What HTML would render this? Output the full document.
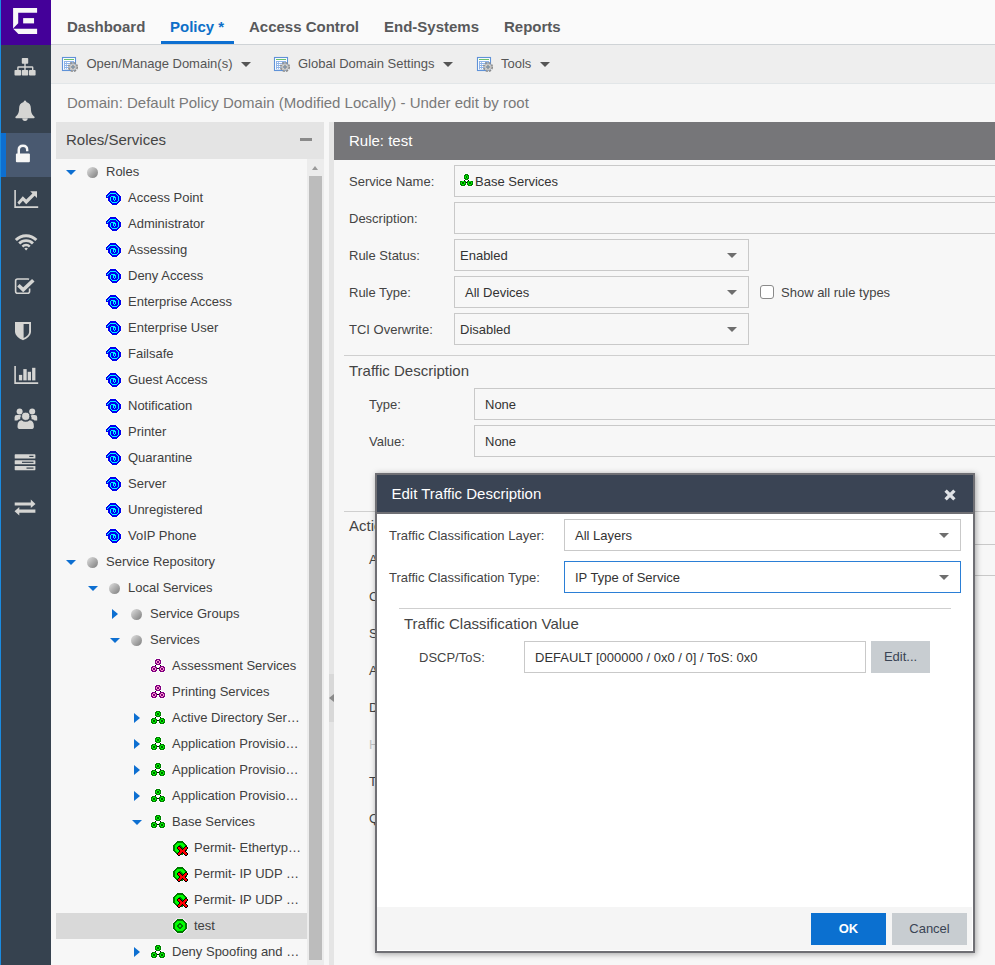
<!DOCTYPE html>
<html lang="en">
<head>
<meta charset="utf-8">
<title>Policy</title>
<style>
*{box-sizing:border-box;margin:0;padding:0}
html,body{width:995px;height:965px;overflow:hidden;background:#f7f7f7;font-family:"Liberation Sans",Arial,sans-serif;color:#444;font-size:14px}
.abs{position:absolute}
#app{position:relative;width:995px;height:965px;overflow:hidden;background:#f7f7f7}
/* sidebar */
#edge{left:0;top:0;width:1px;height:965px;background:#1a8be0}
#logo{left:1px;top:0;width:50px;height:45px;background:#440099}
#side{left:1px;top:45px;width:50px;height:920px;background:#36424f}
#sideact{left:1px;top:133px;width:50px;height:44px;background:#495970;border-left:5px solid #0d6fd1}
.sic{position:absolute;left:1px;width:50px;height:44px}
/* nav */
#nav{left:51px;top:0;width:944px;height:45px;background:#fafafa;border-bottom:1px solid #cfd3d6}
.tab{position:absolute;top:16.5px;font-size:15px;font-weight:bold;color:#58595b;line-height:20px;white-space:nowrap}
.tab.on{color:#0d6fc8}
#tabline{left:161px;top:41px;width:73px;height:3px;background:#0d6fd1}
/* toolbar */
#tb{left:51px;top:45px;width:944px;height:39px;background:#eeeeee;border-bottom:1px solid #e2e6e8}
.tbt{position:absolute;top:54.5px;font-size:13px;color:#555;line-height:18px;white-space:nowrap}
.caret{position:absolute;width:0;height:0;border-left:5px solid transparent;border-right:5px solid transparent;border-top:5px solid #555}
#dom{left:67px;top:93px;font-size:15px;color:#7a7a7a;line-height:20px;white-space:nowrap}
/* left panel */
#lph{left:56px;top:122px;width:268px;height:37px;background:#e4e4e4}
#lpt{left:66px;top:130px;font-size:15px;color:#444;line-height:20px}
#lpm{left:300px;top:138px;width:12px;height:3px;background:#8a8a8a}
#tree{left:56px;top:159px;width:251px;height:806px;background:#f7f7f7;overflow:hidden}
.row{position:absolute;left:0;width:251px;height:26px;font-size:13px;color:#404040;line-height:26px;white-space:nowrap}
.row.sel{background:#d9d9d9}
.row span{position:absolute;top:0}
.row i{position:absolute;display:block}
.exd{top:11px;width:0;height:0;border-left:5px solid transparent;border-right:5px solid transparent;border-top:5px solid #0d6fd1}
.exr{top:8px;width:0;height:0;border-top:5px solid transparent;border-bottom:5px solid transparent;border-left:6px solid #0d6fd1}
.ball{top:8px;width:11px;height:11px;border-radius:50%;background:linear-gradient(135deg,#d6d6d6 12%,#adadad 50%,#868686 90%)}
.ti{position:absolute;top:5px}
#sb{left:307px;top:159px;width:17px;height:806px;background:#ececec}
#sbt{left:309px;top:176px;width:13px;height:784px;background:#bcbcbc}
#split{left:329px;top:122px;width:5px;height:843px;background:#e5e5e5}
/* right panel */
#rph{left:334px;top:122px;width:661px;height:38px;background:#767679}
#rpt{left:349px;top:131px;font-size:15px;color:#fff;line-height:20px}
.lbl{position:absolute;margin-top:1px;font-size:13px;color:#444;line-height:18px;white-space:nowrap}
.fld{position:absolute;background:transparent;border:1px solid #c9c9c9;font-size:13px;color:#333;line-height:32px;height:32px;white-space:nowrap}
.fld.w{background:#fff}
.dd{position:absolute;right:11px;top:13px;width:0;height:0;border-left:5px solid transparent;border-right:5px solid transparent;border-top:5px solid #6e6e6e}
.cb{width:14px;height:14px;border:1px solid #8a8a8a;border-radius:3px;background:#fff}
.hl{position:absolute;height:1px;background:#cfcfcf}
.sec{position:absolute;font-size:15px;color:#444;line-height:20px;white-space:nowrap}
/* modal */
#modal{left:375px;top:473px;width:600px;height:480px;background:#fff;border:2px solid #6f6f74;box-shadow:1px 1px 6px rgba(0,0,0,.35)}
#mh{left:377px;top:475px;width:596px;height:39px;background:#3a4454;border-bottom:2px solid #6f6f74}
#mt{left:391.5px;top:484px;font-size:15px;color:#fff;line-height:20px;white-space:nowrap}
#mf{left:377px;top:907px;width:595px;height:43px;background:#f5f5f5}
.btn{position:absolute;height:32px;line-height:32px;text-align:center;font-size:13px}
</style>
</head>
<body>
<div id="app">
<svg width="0" height="0" style="position:absolute">
<defs>
<symbol id="i-role" viewBox="0 0 16 16"><path d="M4 1H10L15 6V11L11 15H6L2 11V8H0V5z" fill="none" stroke="#fffff2" stroke-width="1.6" stroke-opacity=".8"/><g shape-rendering="crispEdges"><rect x="4" y="1" width="6" height="1" fill="#0000f0"/><rect x="3" y="2" width="8" height="1" fill="#0000f0"/><rect x="2" y="3" width="2" height="1" fill="#0000f0"/><rect x="4" y="3" width="6" height="1" fill="#00f6ff"/><rect x="10" y="3" width="2" height="1" fill="#0000f0"/><rect x="1" y="4" width="2" height="1" fill="#0000f0"/><rect x="3" y="4" width="1" height="1" fill="#00f6ff"/><rect x="4" y="4" width="6" height="1" fill="#0000f0"/><rect x="10" y="4" width="1" height="1" fill="#00f6ff"/><rect x="11" y="4" width="2" height="1" fill="#0000f0"/><rect x="0" y="5" width="2" height="1" fill="#0000f0"/><rect x="2" y="5" width="1" height="1" fill="#00f6ff"/><rect x="3" y="5" width="8" height="1" fill="#0000f0"/><rect x="11" y="5" width="1" height="1" fill="#00f6ff"/><rect x="12" y="5" width="2" height="1" fill="#0000f0"/><rect x="0" y="6" width="1" height="1" fill="#0000f0"/><rect x="1" y="6" width="1" height="1" fill="#00f6ff"/><rect x="2" y="6" width="3" height="1" fill="#0000f0"/><rect x="5" y="6" width="4" height="1" fill="#00f6ff"/><rect x="9" y="6" width="3" height="1" fill="#0000f0"/><rect x="12" y="6" width="1" height="1" fill="#00f6ff"/><rect x="13" y="6" width="2" height="1" fill="#0000f0"/><rect x="0" y="7" width="4" height="1" fill="#0000f0"/><rect x="4" y="7" width="1" height="1" fill="#00f6ff"/><rect x="5" y="7" width="2" height="1" fill="#0000f0"/><rect x="7" y="7" width="3" height="1" fill="#00f6ff"/><rect x="10" y="7" width="2" height="1" fill="#0000f0"/><rect x="12" y="7" width="1" height="1" fill="#00f6ff"/><rect x="13" y="7" width="2" height="1" fill="#0000f0"/><rect x="2" y="8" width="2" height="1" fill="#0000f0"/><rect x="4" y="8" width="1" height="1" fill="#00f6ff"/><rect x="5" y="8" width="2" height="1" fill="#0000f0"/><rect x="7" y="8" width="1" height="1" fill="#00f6ff"/><rect x="8" y="8" width="1" height="1" fill="#0000f0"/><rect x="9" y="8" width="1" height="1" fill="#00f6ff"/><rect x="10" y="8" width="2" height="1" fill="#0000f0"/><rect x="12" y="8" width="1" height="1" fill="#00f6ff"/><rect x="13" y="8" width="2" height="1" fill="#0000f0"/><rect x="2" y="9" width="2" height="1" fill="#0000f0"/><rect x="4" y="9" width="1" height="1" fill="#00f6ff"/><rect x="5" y="9" width="2" height="1" fill="#0000f0"/><rect x="7" y="9" width="1" height="1" fill="#00f6ff"/><rect x="8" y="9" width="1" height="1" fill="#0000f0"/><rect x="9" y="9" width="1" height="1" fill="#00f6ff"/><rect x="10" y="9" width="2" height="1" fill="#0000f0"/><rect x="12" y="9" width="1" height="1" fill="#00f6ff"/><rect x="13" y="9" width="2" height="1" fill="#0000f0"/><rect x="2" y="10" width="2" height="1" fill="#0000f0"/><rect x="4" y="10" width="1" height="1" fill="#00f6ff"/><rect x="5" y="10" width="3" height="1" fill="#0000f0"/><rect x="8" y="10" width="1" height="1" fill="#00f6ff"/><rect x="9" y="10" width="3" height="1" fill="#0000f0"/><rect x="12" y="10" width="1" height="1" fill="#00f6ff"/><rect x="13" y="10" width="2" height="1" fill="#0000f0"/><rect x="3" y="11" width="2" height="1" fill="#0000f0"/><rect x="5" y="11" width="1" height="1" fill="#00f6ff"/><rect x="6" y="11" width="5" height="1" fill="#0000f0"/><rect x="11" y="11" width="1" height="1" fill="#00f6ff"/><rect x="12" y="11" width="2" height="1" fill="#0000f0"/><rect x="4" y="12" width="2" height="1" fill="#0000f0"/><rect x="6" y="12" width="5" height="1" fill="#00f6ff"/><rect x="11" y="12" width="2" height="1" fill="#0000f0"/><rect x="5" y="13" width="7" height="1" fill="#0000f0"/><rect x="6" y="14" width="5" height="1" fill="#0000f0"/></g></symbol>
<symbol id="i-svcp" viewBox="0 0 16 16"><g fill="#fff" fill-opacity=".85"><circle cx="8" cy="4" r="3.9"/><circle cx="4" cy="11" r="3.9"/><circle cx="12" cy="11" r="3.9"/><rect x="5" y="6" width="6" height="4"/></g><g shape-rendering="crispEdges"><rect x="6" y="1" width="4" height="1" fill="#800080"/><rect x="5" y="2" width="2" height="1" fill="#800080"/><rect x="7" y="2" width="2" height="1" fill="#ff99cc"/><rect x="9" y="2" width="2" height="1" fill="#800080"/><rect x="5" y="3" width="1" height="1" fill="#800080"/><rect x="6" y="3" width="1" height="1" fill="#ff99cc"/><rect x="7" y="3" width="2" height="1" fill="#800080"/><rect x="9" y="3" width="1" height="1" fill="#ff99cc"/><rect x="10" y="3" width="1" height="1" fill="#800080"/><rect x="5" y="4" width="1" height="1" fill="#800080"/><rect x="6" y="4" width="1" height="1" fill="#ff99cc"/><rect x="7" y="4" width="2" height="1" fill="#800080"/><rect x="9" y="4" width="1" height="1" fill="#ff99cc"/><rect x="10" y="4" width="1" height="1" fill="#800080"/><rect x="5" y="5" width="2" height="1" fill="#800080"/><rect x="7" y="5" width="2" height="1" fill="#ff99cc"/><rect x="9" y="5" width="2" height="1" fill="#800080"/><rect x="6" y="6" width="4" height="1" fill="#800080"/><rect x="2" y="8" width="4" height="1" fill="#800080"/><rect x="1" y="9" width="2" height="1" fill="#800080"/><rect x="3" y="9" width="2" height="1" fill="#ff99cc"/><rect x="5" y="9" width="2" height="1" fill="#800080"/><rect x="1" y="10" width="1" height="1" fill="#800080"/><rect x="2" y="10" width="1" height="1" fill="#ff99cc"/><rect x="3" y="10" width="2" height="1" fill="#800080"/><rect x="5" y="10" width="1" height="1" fill="#ff99cc"/><rect x="6" y="10" width="1" height="1" fill="#800080"/><rect x="1" y="11" width="1" height="1" fill="#800080"/><rect x="2" y="11" width="1" height="1" fill="#ff99cc"/><rect x="3" y="11" width="2" height="1" fill="#800080"/><rect x="5" y="11" width="1" height="1" fill="#ff99cc"/><rect x="6" y="11" width="1" height="1" fill="#800080"/><rect x="1" y="12" width="2" height="1" fill="#800080"/><rect x="3" y="12" width="2" height="1" fill="#ff99cc"/><rect x="5" y="12" width="2" height="1" fill="#800080"/><rect x="2" y="13" width="4" height="1" fill="#800080"/><rect x="10" y="8" width="4" height="1" fill="#800080"/><rect x="9" y="9" width="2" height="1" fill="#800080"/><rect x="11" y="9" width="2" height="1" fill="#ff99cc"/><rect x="13" y="9" width="2" height="1" fill="#800080"/><rect x="9" y="10" width="1" height="1" fill="#800080"/><rect x="10" y="10" width="1" height="1" fill="#ff99cc"/><rect x="11" y="10" width="2" height="1" fill="#800080"/><rect x="13" y="10" width="1" height="1" fill="#ff99cc"/><rect x="14" y="10" width="1" height="1" fill="#800080"/><rect x="9" y="11" width="1" height="1" fill="#800080"/><rect x="10" y="11" width="1" height="1" fill="#ff99cc"/><rect x="11" y="11" width="2" height="1" fill="#800080"/><rect x="13" y="11" width="1" height="1" fill="#ff99cc"/><rect x="14" y="11" width="1" height="1" fill="#800080"/><rect x="9" y="12" width="2" height="1" fill="#800080"/><rect x="11" y="12" width="2" height="1" fill="#ff99cc"/><rect x="13" y="12" width="2" height="1" fill="#800080"/><rect x="10" y="13" width="4" height="1" fill="#800080"/><rect x="5" y="7" width="1" height="1" fill="#000"/><rect x="10" y="7" width="1" height="1" fill="#000"/><rect x="7" y="10" width="2" height="1" fill="#000"/></g></symbol>
<symbol id="i-svcg" viewBox="0 0 16 16"><g fill="#fff" fill-opacity=".85"><circle cx="8" cy="4" r="3.9"/><circle cx="4" cy="11" r="3.9"/><circle cx="12" cy="11" r="3.9"/><rect x="5" y="6" width="6" height="4"/></g><g shape-rendering="crispEdges"><rect x="6" y="1" width="4" height="1" fill="#008000"/><rect x="5" y="2" width="2" height="1" fill="#008000"/><rect x="7" y="2" width="2" height="1" fill="#00ff00"/><rect x="9" y="2" width="2" height="1" fill="#008000"/><rect x="5" y="3" width="1" height="1" fill="#008000"/><rect x="6" y="3" width="1" height="1" fill="#00ff00"/><rect x="7" y="3" width="2" height="1" fill="#006000"/><rect x="9" y="3" width="1" height="1" fill="#00ff00"/><rect x="10" y="3" width="1" height="1" fill="#008000"/><rect x="5" y="4" width="1" height="1" fill="#008000"/><rect x="6" y="4" width="1" height="1" fill="#00ff00"/><rect x="7" y="4" width="2" height="1" fill="#006000"/><rect x="9" y="4" width="1" height="1" fill="#00ff00"/><rect x="10" y="4" width="1" height="1" fill="#008000"/><rect x="5" y="5" width="2" height="1" fill="#008000"/><rect x="7" y="5" width="2" height="1" fill="#00ff00"/><rect x="9" y="5" width="2" height="1" fill="#008000"/><rect x="6" y="6" width="4" height="1" fill="#008000"/><rect x="2" y="8" width="4" height="1" fill="#008000"/><rect x="1" y="9" width="2" height="1" fill="#008000"/><rect x="3" y="9" width="2" height="1" fill="#00ff00"/><rect x="5" y="9" width="2" height="1" fill="#008000"/><rect x="1" y="10" width="1" height="1" fill="#008000"/><rect x="2" y="10" width="1" height="1" fill="#00ff00"/><rect x="3" y="10" width="2" height="1" fill="#006000"/><rect x="5" y="10" width="1" height="1" fill="#00ff00"/><rect x="6" y="10" width="1" height="1" fill="#008000"/><rect x="1" y="11" width="1" height="1" fill="#008000"/><rect x="2" y="11" width="1" height="1" fill="#00ff00"/><rect x="3" y="11" width="2" height="1" fill="#006000"/><rect x="5" y="11" width="1" height="1" fill="#00ff00"/><rect x="6" y="11" width="1" height="1" fill="#008000"/><rect x="1" y="12" width="2" height="1" fill="#008000"/><rect x="3" y="12" width="2" height="1" fill="#00ff00"/><rect x="5" y="12" width="2" height="1" fill="#008000"/><rect x="2" y="13" width="4" height="1" fill="#008000"/><rect x="10" y="8" width="4" height="1" fill="#008000"/><rect x="9" y="9" width="2" height="1" fill="#008000"/><rect x="11" y="9" width="2" height="1" fill="#00ff00"/><rect x="13" y="9" width="2" height="1" fill="#008000"/><rect x="9" y="10" width="1" height="1" fill="#008000"/><rect x="10" y="10" width="1" height="1" fill="#00ff00"/><rect x="11" y="10" width="2" height="1" fill="#006000"/><rect x="13" y="10" width="1" height="1" fill="#00ff00"/><rect x="14" y="10" width="1" height="1" fill="#008000"/><rect x="9" y="11" width="1" height="1" fill="#008000"/><rect x="10" y="11" width="1" height="1" fill="#00ff00"/><rect x="11" y="11" width="2" height="1" fill="#006000"/><rect x="13" y="11" width="1" height="1" fill="#00ff00"/><rect x="14" y="11" width="1" height="1" fill="#008000"/><rect x="9" y="12" width="2" height="1" fill="#008000"/><rect x="11" y="12" width="2" height="1" fill="#00ff00"/><rect x="13" y="12" width="2" height="1" fill="#008000"/><rect x="10" y="13" width="4" height="1" fill="#008000"/><rect x="5" y="7" width="1" height="1" fill="#000"/><rect x="10" y="7" width="1" height="1" fill="#000"/><rect x="7" y="10" width="2" height="1" fill="#000"/></g></symbol>
<symbol id="i-rule" viewBox="0 0 16 16"><path d="M5 1H11L15 5V11L11 15H5L1 11V5z" fill="none" stroke="#fff4ff" stroke-width="1.6" stroke-opacity=".7"/><g shape-rendering="crispEdges"><rect x="5" y="1" width="6" height="1" fill="#007800"/><rect x="4" y="2" width="8" height="1" fill="#007800"/><rect x="3" y="3" width="2" height="1" fill="#007800"/><rect x="5" y="3" width="6" height="1" fill="#00ff00"/><rect x="11" y="3" width="2" height="1" fill="#007800"/><rect x="2" y="4" width="2" height="1" fill="#007800"/><rect x="4" y="4" width="8" height="1" fill="#00ff00"/><rect x="12" y="4" width="2" height="1" fill="#007800"/><rect x="1" y="5" width="2" height="1" fill="#007800"/><rect x="3" y="5" width="4" height="1" fill="#00ff00"/><rect x="7" y="5" width="2" height="1" fill="#007800"/><rect x="9" y="5" width="4" height="1" fill="#00ff00"/><rect x="13" y="5" width="2" height="1" fill="#007800"/><rect x="1" y="6" width="2" height="1" fill="#007800"/><rect x="3" y="6" width="3" height="1" fill="#00ff00"/><rect x="6" y="6" width="4" height="1" fill="#007800"/><rect x="10" y="6" width="3" height="1" fill="#00ff00"/><rect x="13" y="6" width="2" height="1" fill="#007800"/><rect x="1" y="7" width="2" height="1" fill="#007800"/><rect x="3" y="7" width="2" height="1" fill="#00ff00"/><rect x="5" y="7" width="2" height="1" fill="#007800"/><rect x="7" y="7" width="2" height="1" fill="#00ff00"/><rect x="9" y="7" width="2" height="1" fill="#007800"/><rect x="11" y="7" width="2" height="1" fill="#00ff00"/><rect x="13" y="7" width="2" height="1" fill="#007800"/><rect x="1" y="8" width="2" height="1" fill="#007800"/><rect x="3" y="8" width="2" height="1" fill="#00ff00"/><rect x="5" y="8" width="2" height="1" fill="#007800"/><rect x="7" y="8" width="2" height="1" fill="#00ff00"/><rect x="9" y="8" width="2" height="1" fill="#007800"/><rect x="11" y="8" width="2" height="1" fill="#00ff00"/><rect x="13" y="8" width="2" height="1" fill="#007800"/><rect x="1" y="9" width="2" height="1" fill="#007800"/><rect x="3" y="9" width="3" height="1" fill="#00ff00"/><rect x="6" y="9" width="4" height="1" fill="#007800"/><rect x="10" y="9" width="3" height="1" fill="#00ff00"/><rect x="13" y="9" width="2" height="1" fill="#007800"/><rect x="1" y="10" width="2" height="1" fill="#007800"/><rect x="3" y="10" width="4" height="1" fill="#00ff00"/><rect x="7" y="10" width="2" height="1" fill="#007800"/><rect x="9" y="10" width="4" height="1" fill="#00ff00"/><rect x="13" y="10" width="2" height="1" fill="#007800"/><rect x="2" y="11" width="2" height="1" fill="#007800"/><rect x="4" y="11" width="8" height="1" fill="#00ff00"/><rect x="12" y="11" width="2" height="1" fill="#007800"/><rect x="3" y="12" width="2" height="1" fill="#007800"/><rect x="5" y="12" width="6" height="1" fill="#00ff00"/><rect x="11" y="12" width="2" height="1" fill="#007800"/><rect x="4" y="13" width="8" height="1" fill="#007800"/><rect x="5" y="14" width="6" height="1" fill="#007800"/></g></symbol>
<symbol id="i-rulex" viewBox="0 0 17 17"><path d="M5 1H11L15 5V11L11 15H5L1 11V5z" fill="none" stroke="#fff4ff" stroke-width="1.6" stroke-opacity=".7"/><g shape-rendering="crispEdges"><rect x="5" y="1" width="6" height="1" fill="#007800"/><rect x="4" y="2" width="8" height="1" fill="#007800"/><rect x="3" y="3" width="2" height="1" fill="#007800"/><rect x="5" y="3" width="6" height="1" fill="#00ff00"/><rect x="11" y="3" width="2" height="1" fill="#007800"/><rect x="2" y="4" width="2" height="1" fill="#007800"/><rect x="4" y="4" width="8" height="1" fill="#00ff00"/><rect x="12" y="4" width="2" height="1" fill="#007800"/><rect x="1" y="5" width="2" height="1" fill="#007800"/><rect x="3" y="5" width="4" height="1" fill="#00ff00"/><rect x="7" y="5" width="2" height="1" fill="#007800"/><rect x="9" y="5" width="4" height="1" fill="#00ff00"/><rect x="13" y="5" width="2" height="1" fill="#007800"/><rect x="1" y="6" width="2" height="1" fill="#007800"/><rect x="3" y="6" width="3" height="1" fill="#00ff00"/><rect x="6" y="6" width="4" height="1" fill="#007800"/><rect x="10" y="6" width="3" height="1" fill="#00ff00"/><rect x="13" y="6" width="2" height="1" fill="#007800"/><rect x="1" y="7" width="2" height="1" fill="#007800"/><rect x="3" y="7" width="2" height="1" fill="#00ff00"/><rect x="5" y="7" width="2" height="1" fill="#007800"/><rect x="7" y="7" width="2" height="1" fill="#00ff00"/><rect x="9" y="7" width="2" height="1" fill="#007800"/><rect x="11" y="7" width="2" height="1" fill="#00ff00"/><rect x="13" y="7" width="2" height="1" fill="#007800"/><rect x="1" y="8" width="2" height="1" fill="#007800"/><rect x="3" y="8" width="2" height="1" fill="#00ff00"/><rect x="5" y="8" width="2" height="1" fill="#007800"/><rect x="7" y="8" width="2" height="1" fill="#00ff00"/><rect x="9" y="8" width="2" height="1" fill="#007800"/><rect x="11" y="8" width="2" height="1" fill="#00ff00"/><rect x="13" y="8" width="2" height="1" fill="#007800"/><rect x="1" y="9" width="2" height="1" fill="#007800"/><rect x="3" y="9" width="3" height="1" fill="#00ff00"/><rect x="6" y="9" width="4" height="1" fill="#007800"/><rect x="10" y="9" width="3" height="1" fill="#00ff00"/><rect x="13" y="9" width="2" height="1" fill="#007800"/><rect x="1" y="10" width="2" height="1" fill="#007800"/><rect x="3" y="10" width="4" height="1" fill="#00ff00"/><rect x="7" y="10" width="2" height="1" fill="#007800"/><rect x="9" y="10" width="4" height="1" fill="#00ff00"/><rect x="13" y="10" width="2" height="1" fill="#007800"/><rect x="2" y="11" width="2" height="1" fill="#007800"/><rect x="4" y="11" width="8" height="1" fill="#00ff00"/><rect x="12" y="11" width="2" height="1" fill="#007800"/><rect x="3" y="12" width="2" height="1" fill="#007800"/><rect x="5" y="12" width="6" height="1" fill="#00ff00"/><rect x="11" y="12" width="2" height="1" fill="#007800"/><rect x="4" y="13" width="8" height="1" fill="#007800"/><rect x="5" y="14" width="6" height="1" fill="#007800"/><rect x="6" y="6" width="2" height="1" fill="#000"/><rect x="13" y="6" width="2" height="1" fill="#000"/><rect x="5" y="7" width="1" height="1" fill="#000"/><rect x="6" y="7" width="2" height="1" fill="#ff0000"/><rect x="8" y="7" width="1" height="1" fill="#000"/><rect x="12" y="7" width="1" height="1" fill="#000"/><rect x="13" y="7" width="2" height="1" fill="#ff0000"/><rect x="15" y="7" width="1" height="1" fill="#000"/><rect x="5" y="8" width="1" height="1" fill="#000"/><rect x="6" y="8" width="3" height="1" fill="#ff0000"/><rect x="9" y="8" width="1" height="1" fill="#000"/><rect x="11" y="8" width="1" height="1" fill="#000"/><rect x="12" y="8" width="3" height="1" fill="#ff0000"/><rect x="15" y="8" width="1" height="1" fill="#000"/><rect x="6" y="9" width="1" height="1" fill="#000"/><rect x="7" y="9" width="3" height="1" fill="#ff0000"/><rect x="10" y="9" width="1" height="1" fill="#000"/><rect x="11" y="9" width="3" height="1" fill="#ff0000"/><rect x="14" y="9" width="1" height="1" fill="#000"/><rect x="7" y="10" width="1" height="1" fill="#000"/><rect x="8" y="10" width="5" height="1" fill="#ff0000"/><rect x="13" y="10" width="1" height="1" fill="#000"/><rect x="7" y="11" width="1" height="1" fill="#000"/><rect x="8" y="11" width="5" height="1" fill="#ff0000"/><rect x="13" y="11" width="1" height="1" fill="#000"/><rect x="6" y="12" width="1" height="1" fill="#000"/><rect x="7" y="12" width="3" height="1" fill="#ff0000"/><rect x="10" y="12" width="1" height="1" fill="#000"/><rect x="11" y="12" width="3" height="1" fill="#ff0000"/><rect x="14" y="12" width="1" height="1" fill="#000"/><rect x="5" y="13" width="1" height="1" fill="#000"/><rect x="6" y="13" width="3" height="1" fill="#ff0000"/><rect x="9" y="13" width="1" height="1" fill="#000"/><rect x="11" y="13" width="1" height="1" fill="#000"/><rect x="12" y="13" width="3" height="1" fill="#ff0000"/><rect x="15" y="13" width="1" height="1" fill="#000"/><rect x="5" y="14" width="1" height="1" fill="#000"/><rect x="6" y="14" width="2" height="1" fill="#ff0000"/><rect x="8" y="14" width="1" height="1" fill="#000"/><rect x="12" y="14" width="1" height="1" fill="#000"/><rect x="13" y="14" width="2" height="1" fill="#ff0000"/><rect x="15" y="14" width="1" height="1" fill="#000"/><rect x="6" y="15" width="2" height="1" fill="#000"/><rect x="13" y="15" width="2" height="1" fill="#000"/></g></symbol>
<symbol id="i-tb" viewBox="0 0 18 18">
<rect x="1.5" y="1.5" width="13" height="13" fill="#fff" stroke="#5f92d8" stroke-width="1.1"/>
<rect x="3" y="3" width="10" height="1" fill="#6cc06c"/>
<rect x="3" y="5" width="10" height="8.4" fill="#8fb3e8"/>
<g fill="#fff"><rect x="4" y="6" width="1.2" height="1"/><rect x="6" y="6" width="3" height="1"/><rect x="10" y="6" width="1.2" height="1"/><rect x="4" y="8" width="1.2" height="1"/><rect x="6" y="8" width="3" height="1"/><rect x="4" y="10" width="1.2" height="1"/><rect x="6" y="10" width="3" height="1"/><rect x="4" y="12" width="1.2" height="1"/><rect x="6" y="12" width="3" height="1"/></g>
<circle cx="12" cy="11" r="4.1" fill="none" stroke="#8a8a8a" stroke-width="1.9" stroke-dasharray="2.1 1.12"/>
<circle cx="12" cy="11" r="2.7" fill="#f0f0f0" stroke="#c4c4c4" stroke-width="1.6"/>
<circle cx="12" cy="11" r="1.3" fill="#a8d0f8" stroke="#5a5a5a" stroke-width=".8"/>
</symbol>
</defs>
</svg>

<div class="abs" id="edge"></div>
<div class="abs" id="logo"></div>
<div class="abs" id="side"></div>
<div class="abs" id="sideact"></div>
<svg class="abs" style="left:0;top:0" width="52" height="540" viewBox="0 0 52 540">
<g fill="#f8f8f8">
<path d="M13.1 8H37.1V12.8H18.2V23.2L13.1 28.4Z"/>
<path d="M13.2 28.7H37.1V34H18.4Z"/>
<rect x="23.15" y="18.1" width="10.9" height="5.3"/>
</g>
<g fill="#d5d5d3" stroke="none">
<!-- sitemap -->
<rect x="21.8" y="58" width="6.4" height="5.8" rx=".8"/>
<rect x="14.5" y="70" width="6.6" height="5.6" rx=".8"/><rect x="21.8" y="70" width="6.4" height="5.6" rx=".8"/><rect x="29" y="70" width="6.6" height="5.6" rx=".8"/>
<path d="M24.3 63H25.7V66.3H32.1Q33.4 66.3 33.4 67.6V70.5H32V67.7H25.7V70.5H24.3V67.7H18.6V70.5H17.2V67.6Q17.2 66.3 18.5 66.3H24.3Z"/>
<!-- bell -->
<path d="M25 100.6a1.3 1.3 0 0 1 1.3 1.5c3.2 .8 4.6 3.300 4.600 6.400c0 4.600 1.600 6.600 3.800 8.400c0 .9 -.5 1.400 -1.400 1.400h-16.600c-.9 0 -1.400 -.5 -1.400 -1.400c2.200 -1.800 3.800 -3.800 3.800 -8.400c0 -3.100 1.400 -5.600 4.600 -6.400a1.300 1.300 0 0 1 1.300 -1.500z"/>
<path d="M22.300 118.300h5.400a2.700 2.700 0 0 1 -5.400 0z"/>
<!-- line chart -->
<path d="M14.3 190H15.900V206.300H38.200V207.900H14.3Z"/>
<path d="M17.400 202.600L22.800 196.300L26.200 199.600L32.400 193.400L30.200 191.300H37V198L34.700 195.700L26.200 204.200L22.900 200.800L19.200 204.700Z"/>
<!-- bar chart -->
<path d="M14.300 366H15.900V382.300H38.200V383.900H14.300Z"/>
<rect x="18.900" y="374.900" width="3.300" height="5.500"/><rect x="23.300" y="369.100" width="3.400" height="11.300"/><rect x="27.700" y="371.800" width="3.300" height="8.600"/><rect x="32.100" y="367.800" width="3.300" height="12.600"/>
<!-- shield -->
<path d="M15 322H31V331.500C31 336 26.500 338.800 23 340.200C19.500 338.800 15 336 15 331.500Z"/>
<!-- users -->
<circle cx="19.600" cy="411.600" r="3"/><circle cx="32.200" cy="411.600" r="3"/>
<path d="M14.600 420.500v-3.200q0 -2.300 2.300 -2.300h2.500q1 0 1.800 .6q-1.200 1.600 -1 3.600q-1.800 .1 -2.900 1.300zM37.200 420.500v-3.200q0 -2.300 -2.300 -2.300h-2.500q-1 0 -1.800 .6q1.200 1.600 1 3.600q1.800 .1 2.900 1.300z"/>
<circle cx="25.700" cy="416.300" r="4.100" stroke="#36424f" stroke-width=".8"/>
<path d="M17.500 426.500q0 -6 4.200 -6.200q1.700 1.500 4 1.500q2.300 0 4 -1.500q4.200 .2 4.200 6.200q0 2.600 -2.800 2.600h-10.800q-2.800 0 -2.800 -2.600z"/>
<!-- server -->
<rect x="14.700" y="454.300" width="20.700" height="4.200" rx=".6"/><rect x="14.700" y="460.200" width="20.700" height="4.100" rx=".6"/><rect x="14.700" y="466" width="20.700" height="4.200" rx=".6"/>
<!-- exchange -->
<path d="M14.700 502.400H30.800V499.600L35.500 503.900L30.800 508.100V505.500H14.700Z"/>
<path d="M35.400 509.600H19.300V507L14.500 511.200L19.300 515.400V512.800H35.400Z"/>
</g>
<g fill="#36424f">
<path d="M23.600 323.900H29.100V331.400C29.100 334.700 26.300 336.800 23.600 338Z"/>
<rect x="29.300" y="455.800" width="4.200" height="1.200"/><rect x="22" y="461.700" width="11.500" height="1.200"/><rect x="26.500" y="467.500" width="7" height="1.200"/>
</g>
<!-- unlock -->
<g fill="#f6f6f6">
<rect x="15.900" y="153.500" width="14" height="8.700" rx="1"/>
<path d="M17.500 154V150Q17.500 144.500 23 144.500Q28.400 144.500 28.400 150V151.200H26V150Q26 146.900 23 146.900Q20 146.900 20 150V154Z"/>
</g>
<!-- wifi -->
<g fill="none" stroke="#d5d5d3" stroke-linecap="butt">
<path transform="translate(0 .8)" d="M15.85 239.25A14.5 14.5 0 0 1 36.35 239.25" stroke-width="3"/>
<path transform="translate(0 .8)" d="M19.24 242.64A9.7 9.7 0 0 1 32.96 242.64" stroke-width="2.8"/>
<path transform="translate(0 .8)" d="M22.42 245.82A5.2 5.2 0 0 1 29.78 245.82" stroke-width="2.5"/>
<!-- check square -->
<path d="M29.600 288.500V291.300Q29.600 293.300 27.600 293.300H17.600Q15.600 293.300 15.600 291.300V281Q15.600 279 17.600 279H27.600Q28.400 279 29 279.300" stroke-width="1.600"/>
<path d="M18.400 285.300L23.200 289.800L33.300 280.200" stroke-width="3.600"/>
</g>
<path transform="translate(0 .8)" d="M24.3 247.6Q26.1 246.4 27.9 247.6L26.1 249.6Z" fill="#d5d5d3"/>
</svg>


<div class="abs" id="nav"></div>
<div class="tab" style="left:67px">Dashboard</div>
<div class="tab on" style="left:170px">Policy *</div>
<div class="tab" style="left:249px">Access Control</div>
<div class="tab" style="left:384px">End-Systems</div>
<div class="tab" style="left:504px">Reports</div>
<div class="abs" id="tabline"></div>

<div class="abs" id="tb"></div>
<svg class="abs" style="left:61px;top:56px" width="18" height="18"><use href="#i-tb"/></svg>
<svg class="abs" style="left:273px;top:56px" width="18" height="18"><use href="#i-tb"/></svg>
<svg class="abs" style="left:476px;top:56px" width="18" height="18"><use href="#i-tb"/></svg>

<div class="tbt" style="left:86.5px">Open/Manage Domain(s)</div>
<div class="caret" style="left:241px;top:62px"></div>
<div class="tbt" style="left:298px">Global Domain Settings</div>
<div class="caret" style="left:443px;top:62px"></div>
<div class="tbt" style="left:501px">Tools</div>
<div class="caret" style="left:540px;top:62px"></div>

<div class="abs" id="dom">Domain: Default Policy Domain (Modified Locally) - Under edit by root</div>

<div class="abs" id="lph"></div>
<div class="abs" id="lpt">Roles/Services</div>
<div class="abs" id="lpm"></div>
<div class="abs" id="tree">
<div class="row" style="top:0px"><i class="exd" style="left:10px"></i><i class="ball" style="left:31px"></i><span style="left:50px">Roles</span></div>
<div class="row" style="top:26px"><svg class="ti" style="left:50px" width="16" height="16"><use href="#i-role"/></svg><span style="left:72px">Access Point</span></div>
<div class="row" style="top:52px"><svg class="ti" style="left:50px" width="16" height="16"><use href="#i-role"/></svg><span style="left:72px">Administrator</span></div>
<div class="row" style="top:78px"><svg class="ti" style="left:50px" width="16" height="16"><use href="#i-role"/></svg><span style="left:72px">Assessing</span></div>
<div class="row" style="top:104px"><svg class="ti" style="left:50px" width="16" height="16"><use href="#i-role"/></svg><span style="left:72px">Deny Access</span></div>
<div class="row" style="top:130px"><svg class="ti" style="left:50px" width="16" height="16"><use href="#i-role"/></svg><span style="left:72px">Enterprise Access</span></div>
<div class="row" style="top:156px"><svg class="ti" style="left:50px" width="16" height="16"><use href="#i-role"/></svg><span style="left:72px">Enterprise User</span></div>
<div class="row" style="top:182px"><svg class="ti" style="left:50px" width="16" height="16"><use href="#i-role"/></svg><span style="left:72px">Failsafe</span></div>
<div class="row" style="top:208px"><svg class="ti" style="left:50px" width="16" height="16"><use href="#i-role"/></svg><span style="left:72px">Guest Access</span></div>
<div class="row" style="top:234px"><svg class="ti" style="left:50px" width="16" height="16"><use href="#i-role"/></svg><span style="left:72px">Notification</span></div>
<div class="row" style="top:260px"><svg class="ti" style="left:50px" width="16" height="16"><use href="#i-role"/></svg><span style="left:72px">Printer</span></div>
<div class="row" style="top:286px"><svg class="ti" style="left:50px" width="16" height="16"><use href="#i-role"/></svg><span style="left:72px">Quarantine</span></div>
<div class="row" style="top:312px"><svg class="ti" style="left:50px" width="16" height="16"><use href="#i-role"/></svg><span style="left:72px">Server</span></div>
<div class="row" style="top:338px"><svg class="ti" style="left:50px" width="16" height="16"><use href="#i-role"/></svg><span style="left:72px">Unregistered</span></div>
<div class="row" style="top:364px"><svg class="ti" style="left:50px" width="16" height="16"><use href="#i-role"/></svg><span style="left:72px">VoIP Phone</span></div>
<div class="row" style="top:390px"><i class="exd" style="left:10px"></i><i class="ball" style="left:31px"></i><span style="left:50px">Service Repository</span></div>
<div class="row" style="top:416px"><i class="exd" style="left:32px"></i><i class="ball" style="left:53px"></i><span style="left:72px">Local Services</span></div>
<div class="row" style="top:442px"><i class="exr" style="left:56px"></i><i class="ball" style="left:75px"></i><span style="left:94px">Service Groups</span></div>
<div class="row" style="top:468px"><i class="exd" style="left:54px"></i><i class="ball" style="left:75px"></i><span style="left:94px">Services</span></div>
<div class="row" style="top:494px"><svg class="ti" style="left:94px" width="16" height="16"><use href="#i-svcp"/></svg><span style="left:116px">Assessment Services</span></div>
<div class="row" style="top:520px"><svg class="ti" style="left:94px" width="16" height="16"><use href="#i-svcp"/></svg><span style="left:116px">Printing Services</span></div>
<div class="row" style="top:546px"><i class="exr" style="left:78px"></i><svg class="ti" style="left:94px" width="16" height="16"><use href="#i-svcg"/></svg><span style="left:116px">Active Directory Ser…</span></div>
<div class="row" style="top:572px"><i class="exr" style="left:78px"></i><svg class="ti" style="left:94px" width="16" height="16"><use href="#i-svcg"/></svg><span style="left:116px">Application Provisio…</span></div>
<div class="row" style="top:598px"><i class="exr" style="left:78px"></i><svg class="ti" style="left:94px" width="16" height="16"><use href="#i-svcg"/></svg><span style="left:116px">Application Provisio…</span></div>
<div class="row" style="top:624px"><i class="exr" style="left:78px"></i><svg class="ti" style="left:94px" width="16" height="16"><use href="#i-svcg"/></svg><span style="left:116px">Application Provisio…</span></div>
<div class="row" style="top:650px"><i class="exd" style="left:76px"></i><svg class="ti" style="left:94px" width="16" height="16"><use href="#i-svcg"/></svg><span style="left:116px">Base Services</span></div>
<div class="row" style="top:676px"><svg class="ti" style="left:116px" width="17" height="17"><use href="#i-rulex"/></svg><span style="left:138px">Permit- Ethertyp…</span></div>
<div class="row" style="top:702px"><svg class="ti" style="left:116px" width="17" height="17"><use href="#i-rulex"/></svg><span style="left:138px">Permit- IP UDP …</span></div>
<div class="row" style="top:728px"><svg class="ti" style="left:116px" width="17" height="17"><use href="#i-rulex"/></svg><span style="left:138px">Permit- IP UDP …</span></div>
<div class="row sel" style="top:754px"><svg class="ti" style="left:116px" width="16" height="16"><use href="#i-rule"/></svg><span style="left:138px">test</span></div>
<div class="row" style="top:780px"><i class="exr" style="left:78px"></i><svg class="ti" style="left:94px" width="16" height="16"><use href="#i-svcg"/></svg><span style="left:116px">Deny Spoofing and …</span></div>
</div>
<div class="abs" id="sb"></div>
<div class="abs" id="sbt"></div>
<div class="abs" id="split"></div>
<div class="abs" style="left:311.6px;top:165.8px;width:0;height:0;border-left:3.8px solid transparent;border-right:3.8px solid transparent;border-bottom:4.2px solid #999"></div>
<div class="abs" style="left:329px;top:674px;width:5px;height:48px;background:#d8d8d8"></div>
<div class="abs" style="left:329px;top:693.8px;width:0;height:0;border-top:4.5px solid transparent;border-bottom:4.5px solid transparent;border-right:5px solid #8a8a8a"></div>

<div class="abs" id="rph"></div>
<div class="abs" id="rpt">Rule: test</div>
<div class="lbl" style="left:349px;top:172px">Service Name:</div>
<div class="fld" style="left:454px;top:165px;width:560px"><svg style="position:absolute;left:4px;top:7px" width="15" height="15" viewBox="0 0 16 16"><use href="#i-svcg"/></svg><span style="position:absolute;left:20px">Base Services</span></div>
<div class="lbl" style="left:349px;top:209px">Description:</div>
<div class="fld" style="left:454px;top:202px;width:560px"></div>
<div class="lbl" style="left:349px;top:246px">Rule Status:</div>
<div class="fld" style="left:454px;top:239px;width:295px"><span style="position:absolute;left:5px">Enabled</span><i class="dd"></i></div>
<div class="lbl" style="left:349px;top:283px">Rule Type:</div>
<div class="fld" style="left:454px;top:276px;width:295px"><span style="position:absolute;left:10px">All Devices</span><i class="dd"></i></div>
<div class="abs cb" style="left:760px;top:285px"></div>
<div class="lbl" style="left:781px;top:283px">Show all rule types</div>
<div class="lbl" style="left:349px;top:320px">TCI Overwrite:</div>
<div class="fld" style="left:454px;top:313px;width:295px"><span style="position:absolute;left:5px">Disabled</span><i class="dd"></i></div>
<div class="hl" style="left:344px;top:355px;width:660px"></div>
<div class="sec" style="left:349px;top:361px">Traffic Description</div>
<div class="lbl" style="left:369px;top:395px">Type:</div>
<div class="fld" style="left:474px;top:388px;width:540px"><span style="position:absolute;left:10px">None</span></div>
<div class="lbl" style="left:369px;top:432px">Value:</div>
<div class="fld" style="left:474px;top:425px;width:540px"><span style="position:absolute;left:10px">None</span></div>
<div class="hl" style="left:344px;top:511px;width:660px"></div>
<div class="sec" style="left:349px;top:516px">Actions</div>
<div class="lbl" style="left:369px;top:550px">Access Control:</div>
<div class="fld" style="left:474px;top:544px;width:540px"></div>
<div class="lbl" style="left:369px;top:587px">Class of Service:</div>
<div class="lbl" style="left:369px;top:624px">System Log:</div>
<div class="lbl" style="left:369px;top:661px">Audit Trap:</div>
<div class="lbl" style="left:369px;top:698px">Disable Port:</div>
<div class="lbl" style="left:369px;top:735px;color:#c4c4c4">HTTP Redirect:</div>
<div class="lbl" style="left:369px;top:772px">Traffic Mirror:</div>
<div class="lbl" style="left:369px;top:809px">Quarantine Role:</div>


<div class="abs" id="modal"></div>
<div class="abs" id="mh"></div>
<div class="abs" id="mt">Edit Traffic Description</div>
<svg class="abs" style="left:944px;top:489px" width="12" height="12" viewBox="0 0 12 12"><path d="M1.6 1.6L10.4 10.4M10.4 1.6L1.6 10.4" stroke="#dfe2e6" stroke-width="3.3" fill="none"/></svg>
<div class="lbl" style="left:389px;top:526px">Traffic Classification Layer:</div>
<div class="fld w" style="left:564px;top:519px;width:397px"><span style="position:absolute;left:10px">All Layers</span><i class="dd"></i></div>
<div class="lbl" style="left:389px;top:568px">Traffic Classification Type:</div>
<div class="fld w" style="left:564px;top:561px;width:397px;border-color:#2b7fd6"><span style="position:absolute;left:10px">IP Type of Service</span><i class="dd"></i></div>
<div class="hl" style="left:399px;top:608px;width:552px"></div>
<div class="sec" style="left:404px;top:614px">Traffic Classification Value</div>
<div class="lbl" style="left:419px;top:648px">DSCP/ToS:</div>
<div class="fld w" style="left:524px;top:641px;width:342px"><span style="position:absolute;left:10px">DEFAULT [000000 / 0x0 / 0] / ToS: 0x0</span></div>
<div class="btn" style="left:871px;top:641px;width:59px;background:#c8cdd1;color:#3a4454">Edit...</div>
<div class="abs" id="mf"></div>
<div class="btn" style="left:811px;top:913px;width:75px;background:#0b70d0;color:#fff;font-weight:bold">OK</div>
<div class="btn" style="left:892px;top:913px;width:75px;background:#c8cdd1;color:#3a4454">Cancel</div>

</div>
</body>
</html>
